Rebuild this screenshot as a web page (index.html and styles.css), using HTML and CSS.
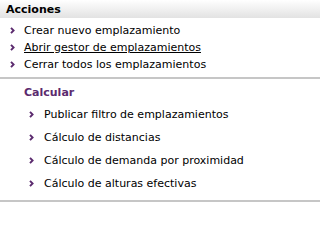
FILE: index.html
```html
<!DOCTYPE html>
<html>
<head>
<meta charset="utf-8">
<link rel="stylesheet" href="styles.css">
</head>
<body>
<div class="panel">
  <div class="header">Acciones</div>
  <ul class="list">
    <li class="item"><svg class="chev" width="5" height="7" viewBox="0 0 5 7"><polyline points="1,0.8 3.6,3.5 1,6.2" fill="none" stroke="#5b2a6e" stroke-width="1.9"/></svg><span>Crear nuevo emplazamiento</span></li>
    <li class="item"><svg class="chev" width="5" height="7" viewBox="0 0 5 7"><polyline points="1,0.8 3.6,3.5 1,6.2" fill="none" stroke="#5b2a6e" stroke-width="1.9"/></svg><span class="u">Abrir gestor de emplazamientos</span></li>
    <li class="item"><svg class="chev" width="5" height="7" viewBox="0 0 5 7"><polyline points="1,0.8 3.6,3.5 1,6.2" fill="none" stroke="#5b2a6e" stroke-width="1.9"/></svg><span>Cerrar todos los emplazamientos</span></li>
  </ul>
  <div class="section">
    <div class="title">Calcular</div>
    <ul class="sublist">
      <li class="subitem"><svg class="chev" width="5" height="7" viewBox="0 0 5 7"><polyline points="1,0.8 3.6,3.5 1,6.2" fill="none" stroke="#5b2a6e" stroke-width="1.9"/></svg><span>Publicar filtro de emplazamientos</span></li>
      <li class="subitem"><svg class="chev" width="5" height="7" viewBox="0 0 5 7"><polyline points="1,0.8 3.6,3.5 1,6.2" fill="none" stroke="#5b2a6e" stroke-width="1.9"/></svg><span>Cálculo de distancias</span></li>
      <li class="subitem"><svg class="chev" width="5" height="7" viewBox="0 0 5 7"><polyline points="1,0.8 3.6,3.5 1,6.2" fill="none" stroke="#5b2a6e" stroke-width="1.9"/></svg><span>Cálculo de demanda por proximidad</span></li>
      <li class="subitem"><svg class="chev" width="5" height="7" viewBox="0 0 5 7"><polyline points="1,0.8 3.6,3.5 1,6.2" fill="none" stroke="#5b2a6e" stroke-width="1.9"/></svg><span>Cálculo de alturas efectivas</span></li>
    </ul>
  </div>
</div>
</body>
</html>
```
FILE: styles.css
```css
html, body {
  margin: 0;
  padding: 0;
  background: #ffffff;
}
body {
  font-family: "DejaVu Sans", Verdana, sans-serif;
  font-size: 11px;
  color: #000000;
}
.panel {
  width: auto;
}
.header {
  height: 18px;
  line-height: 20px;
  padding-left: 6px;
  font-weight: bold;
  background: linear-gradient(to bottom, #ffffff 0%, #e2e2e2 100%);
}
.list, .sublist {
  list-style: none;
  margin: 0;
  padding: 0;
}
.list {
  padding: 4px 0 4px 0;
  border-bottom: 2px solid #c6c6c6;
}
.item {
  display: flex;
  align-items: center;
  height: 17px;
  padding-left: 10px;
}
.chev {
  flex: none;
  display: block;
}
.item .chev {
  margin-right: 9px;
}
.u {
  text-decoration: underline;
}
.section {
  padding: 5px 0 5px 0;
  border-bottom: 2px solid #c6c6c6;
}
.title {
  height: 18px;
  line-height: 18px;
  padding-left: 24px;
  font-weight: bold;
  color: #5b2a6e;
  font-size: 11px;
}
.sublist {
  padding-top: 1px;
}
.subitem {
  display: flex;
  align-items: center;
  height: 23px;
  padding-left: 29px;
}
.subitem .chev {
  margin-right: 10px;
}
```
